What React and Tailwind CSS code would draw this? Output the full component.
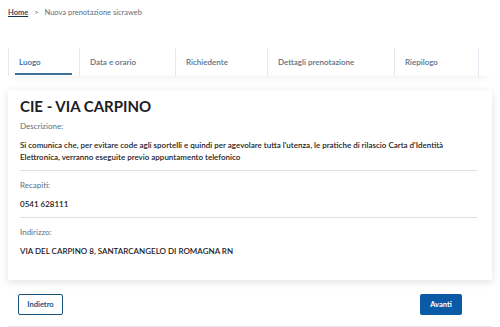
import React from "react";

const steps = [
	{ label: "Luogo", w: "w-[71px]", active: true },
	{ label: "Data e orario", w: "w-[96px]" },
	{ label: "Richiedente", w: "w-[92px]" },
	{ label: "Dettagli prenotazione", w: "w-[127px]" },
	{ label: "Riepilogo", w: "w-[84px]" },
];

const Field = ({ label, children, divider = true, first = false }) => (
	<div className={divider ? "border-b border-[#dcdfe3] mr-[3px]" : "mr-[3px]"}>
		<div className={`text-[8px] text-[#5c6f82] leading-[12px] ${first ? "pt-[4px]" : "pt-[8px]"}`}>{label}</div>
		<div className="text-[8px] text-[#1c2024] font-semibold leading-[12px] pt-[7px] pb-[7px]">
			{children}
		</div>
	</div>
);

export default function App() {
	return (
		<div className="w-[500px] h-[327px] bg-white overflow-hidden font-['Lato',sans-serif] text-[#1c2024]">
			<div className="px-[8px] pt-[8px] flex items-center gap-[6px] text-[7.5px] leading-[10px]">
				<span className="text-[#17324d] font-semibold underline">Home</span>
				<span className="text-[#5c6f82]">&gt;</span>
				<span className="text-[#5c6f82]">Nuova prenotazione sicraweb</span>
			</div>

			<div className="mx-[8px] mt-[30px] flex border-l border-[#e6e9f2] shadow-[0_6px_6px_-4px_rgba(0,0,0,0.06)]">
				{steps.map((s) => (
					<div
						key={s.label}
						className={`${s.w} h-[28px] border-r border-[#e6e9f2] flex items-center pl-[10px] relative`}
					>
						<span
							className={
								s.active
									? "text-[8px] font-semibold text-[#2f6aa0]"
									: "text-[8px] font-semibold text-[#5c6f82]"
							}
						>
							{s.label}
						</span>
						{s.active && (
							<div className="absolute left-[6px] right-[7px] bottom-[1px] h-[2px] bg-[#3b6f9e]" />
						)}
					</div>
				))}
			</div>

			<div className="mx-[8px] mt-[14px] h-[190px] bg-white shadow-[0_2px_8px_rgba(0,0,0,0.12)] pl-[12px] pr-[12px] pt-[6px]">
				<h1 className="text-[15px] font-bold leading-[20px] text-[#1c2024]">CIE - VIA CARPINO</h1>
				<Field label="Descrizione:" first>
					Si comunica che, per evitare code agli sportelli e quindi per agevolare tutta l'utenza, le pratiche di rilascio Carta d'Identità
					<br />
					Elettronica, verranno eseguite previo appuntamento telefonico
				</Field>
				<Field label="Recapiti:">0541 628111</Field>
				<Field label="Indirizzo:" divider={false}>
					VIA DEL CARPINO 8, SANTARCANGELO DI ROMAGNA RN
				</Field>
			</div>

			<div className="mx-[8px] mt-[13px] h-[34px] border-b border-[#e3e6ea] flex justify-between items-start pt-[1px] pl-[10px] pr-[18px]">
				<button className="w-[45px] h-[21px] border border-[#17527f] rounded-[2px] text-[7.5px] font-bold text-[#17527f] bg-white">
					Indietro
				</button>
				<button className="w-[42px] h-[21px] mr-[12px] rounded-[2px] text-[7.5px] font-bold text-white bg-[#0b5aa6]">
					Avanti
				</button>
			</div>
		</div>
	);
}
